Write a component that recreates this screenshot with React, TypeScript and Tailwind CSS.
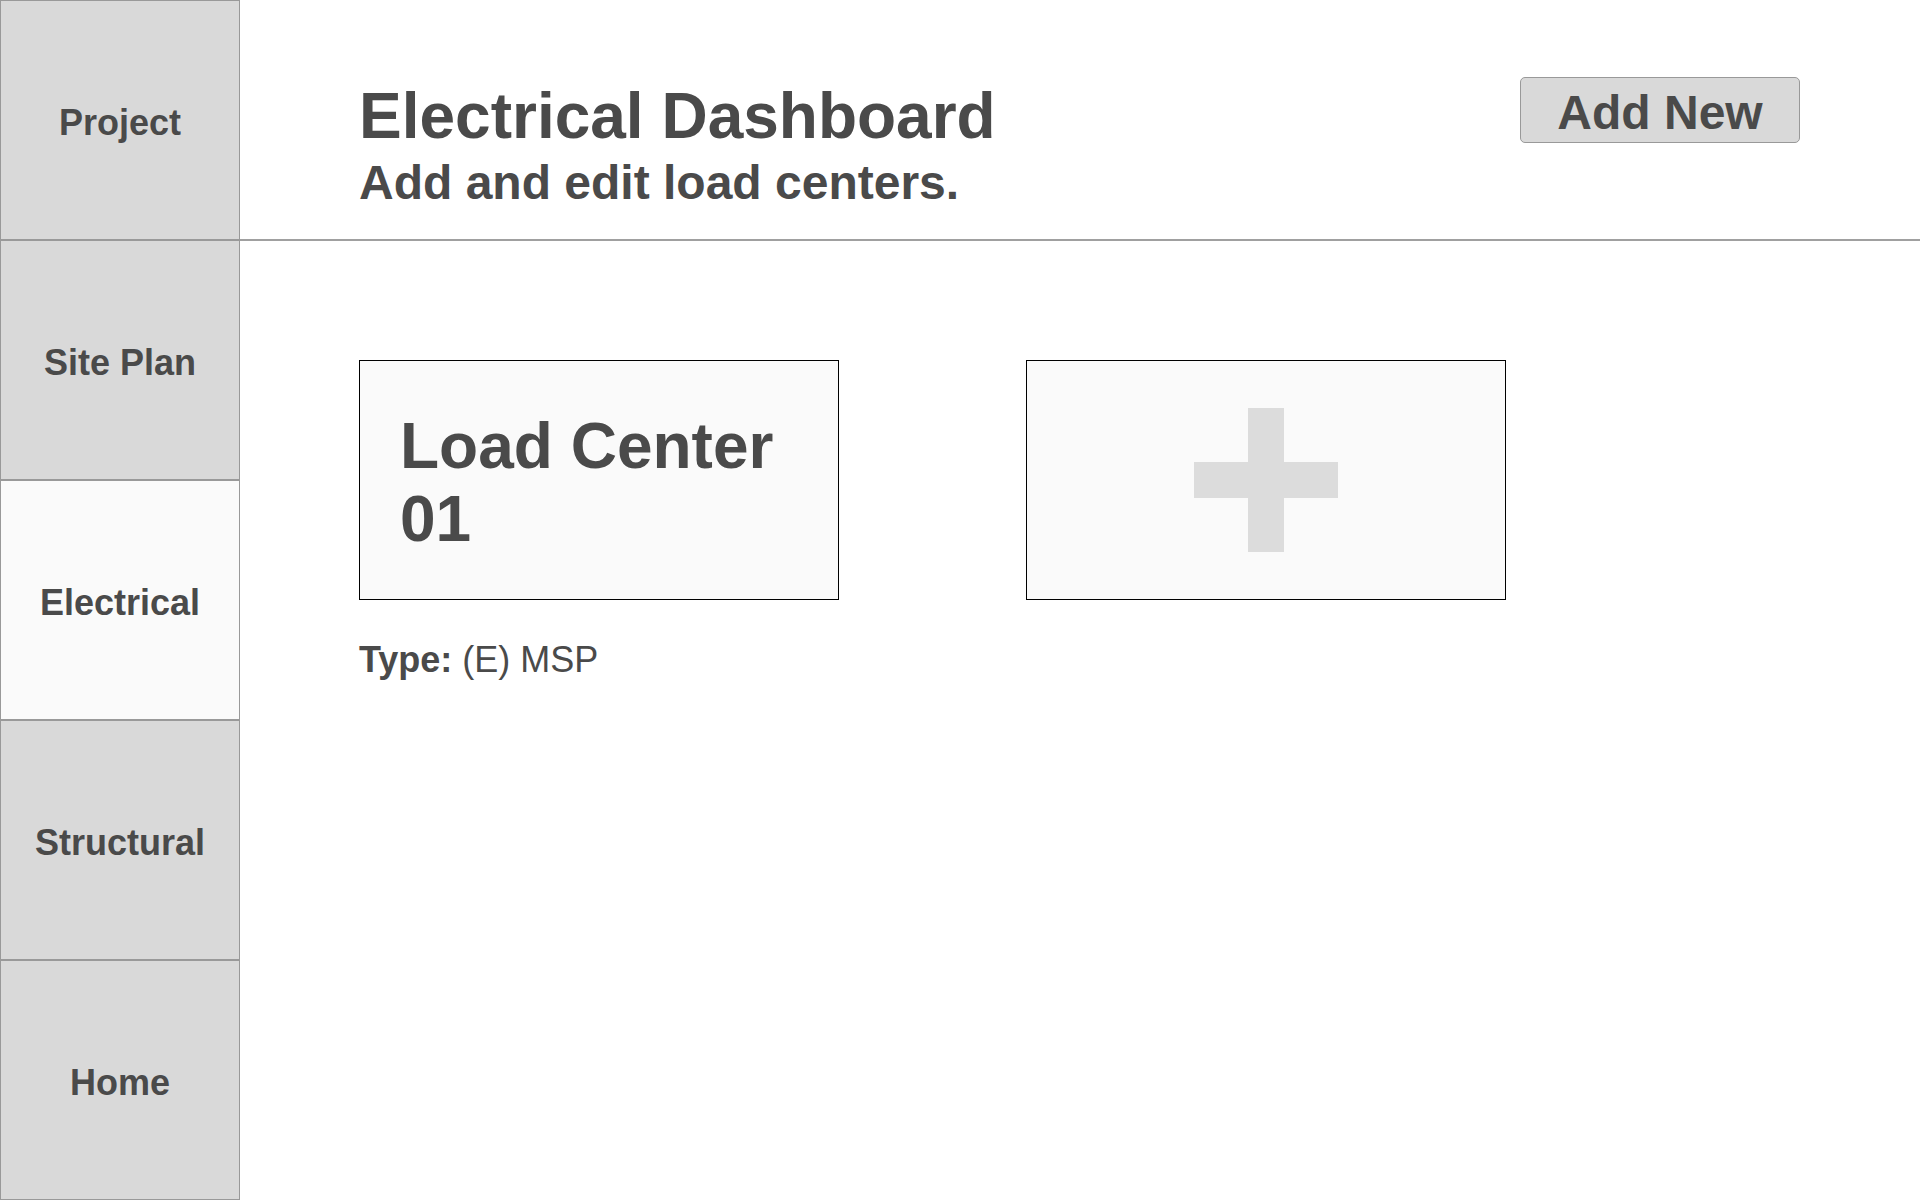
import React from "react";

const navItems = [
  { label: "Project", active: false },
  { label: "Site Plan", active: false },
  { label: "Electrical", active: true },
  { label: "Structural", active: false },
  { label: "Home", active: false },
];

export default function App() {
  return (
    <div
      className="flex w-[1920px] h-[1200px] bg-white text-[#4a4a4a] overflow-hidden"
      style={{ fontFamily: '"Liberation Sans", Arial, sans-serif' }}
    >
      <nav className="flex flex-col w-[240px] shrink-0">
        {navItems.map((item) => (
          <div
            key={item.label}
            className={`flex items-center justify-center h-[240px] pt-[5px] border border-[#999999] text-[36px] font-bold ${
              item.active ? "bg-[#fafafa]" : "bg-[#d9d9d9]"
            }`}
          >
            {item.label}
          </div>
        ))}
      </nav>
      <main className="flex-1 flex flex-col">
        <header className="flex items-start justify-between h-[241px] border-b-2 border-[#a0a0a0] pl-[119px] pr-[120px]">
          <div className="pt-[84px]">
            <h1 className="text-[64px] leading-[64px] font-bold">Electrical Dashboard</h1>
            <p className="text-[48px] leading-[48px] font-bold mt-[11px]">Add and edit load centers.</p>
          </div>
          <button className="mt-[77px] w-[280px] h-[66px] pt-[6px] flex items-center justify-center rounded-[5px] border border-[#999999] bg-[#d9d9d9] text-[48px] leading-none font-bold text-[#4a4a4a]">
            Add New
          </button>
        </header>
        <section className="pl-[119px] pt-[119px]">
          <div className="flex gap-[187px]">
            <div>
              <div className="w-[480px] h-[240px] border border-black bg-[#fafafa] pl-[40px] pt-[49px]">
                <div className="text-[64px] leading-[73px] font-bold">
                  Load Center
                  <br />
                  01
                </div>
              </div>
              <div className="mt-[42px] text-[36px] leading-none">
                <span className="font-bold">Type:</span> (E) MSP
              </div>
            </div>
            <div className="w-[480px] h-[240px] border border-black bg-[#fafafa] flex items-center justify-center">
              <svg width="144" height="144" viewBox="0 0 144 144">
                <rect x="54" y="0" width="36" height="144" fill="#dcdcdc" />
                <rect x="0" y="54" width="144" height="36" fill="#dcdcdc" />
              </svg>
            </div>
          </div>
        </section>
      </main>
    </div>
  );
}
